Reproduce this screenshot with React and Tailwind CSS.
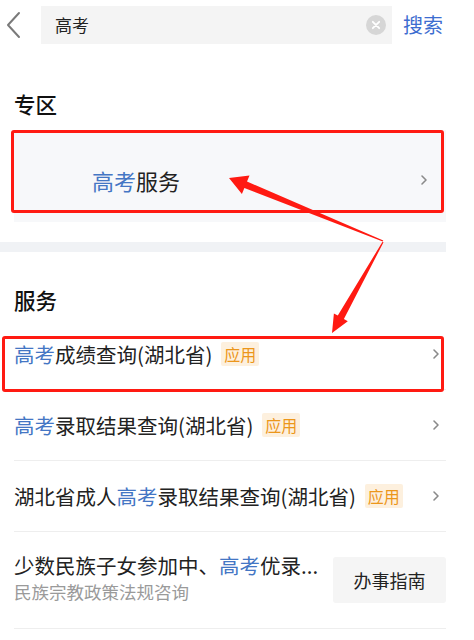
import React from "react";

const hl = "text-[#4476c4]";

function Chevron({ className = "" }) {
  return (
    <svg width="8" height="12" viewBox="0 0 8 12" className={className}>
      <polyline points="2,2 6,6 2,10" fill="none" stroke="#8a8a8a" strokeWidth="1.6" strokeLinecap="round" strokeLinejoin="round" />
    </svg>
  );
}

function Badge() {
  return (
    <span className="ml-[9px] inline-flex h-[24px] items-center rounded-[2px] bg-[#fdf0de] px-[3px] text-[16px] leading-none text-[#ec961a]">
      应用
    </span>
  );
}

function Row({ children, badge = true, last = false }) {
  return (
    <div className={`ml-[14px] flex h-[71px] items-center justify-between pr-[6px] ${last ? "" : "border-b border-[#eeeeee]"}`}>
      <div className="flex items-center text-[20.5px] leading-[26px] text-[#222]">
        <span>{children}</span>
        {badge && <Badge />}
      </div>
      <Chevron />
    </div>
  );
}

export default function App() {
  return (
    <div
      className="relative min-h-[640px] w-[474px] overflow-hidden bg-white"
      style={{ fontFamily: '"Noto Sans CJK SC", "Noto Sans", sans-serif' }}
    >
      <div className="w-[446px]">
        {/* header */}
        <div className="flex h-[50px] items-start pt-[6px]">
          <div className="flex h-[38px] w-[41px] items-center">
            <svg width="24" height="28" viewBox="0 0 24 28" className="ml-[4px]">
              <polyline points="15,2 4,14 15,26" fill="none" stroke="#7a7a7a" strokeWidth="2" strokeLinecap="round" strokeLinejoin="round" />
            </svg>
          </div>
          <div className="flex h-[38px] w-[351px] items-center justify-between bg-[#f4f4f4] pl-[14px] pr-[6px]">
            <span className="text-[17px] text-[#222]">高考</span>
            <svg width="20" height="20" viewBox="0 0 20 20">
              <circle cx="10" cy="10" r="10" fill="#d6d6d6" />
              <path d="M6.8 6.8 L13.2 13.2 M13.2 6.8 L6.8 13.2" stroke="#fff" strokeWidth="1.8" strokeLinecap="round" />
            </svg>
          </div>
          <div className="ml-[11px] flex h-[38px] items-center text-[20px] text-[#3d6dd0]">搜索</div>
        </div>

        {/* 专区 */}
        <div className="flex h-[80px] items-end pb-[13px] pl-[14px] text-[21.5px] font-medium leading-[26px] text-[#111]">
          专区
        </div>
        <div className="ml-[14px] flex h-[92px] items-center justify-between bg-[#f7f8fa] pl-[78px] pr-[18px] pt-[8px]">
          <span className="text-[22px] leading-[28px] text-[#222]">
            <span className={hl}>高考</span>服务
          </span>
          <Chevron />
        </div>
        <div className="h-[20px]" />
        <div className="h-[10px] bg-[#f0f2f5]" />

        {/* 服务 */}
        <div className="flex h-[67px] items-end pb-[6px] pl-[14px] text-[21.5px] font-medium leading-[26px] text-[#111]">
          服务
        </div>
        <Row>
          <span className={hl}>高考</span>成绩查询(湖北省)
        </Row>
        <Row>
          <span className={hl}>高考</span>录取结果查询(湖北省)
        </Row>
        <Row>
          湖北省成人<span className={hl}>高考</span>录取结果查询(湖北省)
        </Row>
        <div className="ml-[14px] flex h-[97px] items-center justify-between border-b border-[#eeeeee]">
          <div className="flex flex-col pb-[4px]">
            <span className="text-[20.5px] leading-[28px] text-[#222]">
              少数民族子女参加中、<span className={hl}>高考</span>优录...
            </span>
            <span className="text-[17.5px] leading-[26px] text-[#9a9a9a]">民族宗教政策法规咨询</span>
          </div>
          <div className="flex h-[46px] w-[113px] items-center justify-center rounded-[3px] bg-[#f5f5f5] text-[18px] text-[#222]">
            办事指南
          </div>
        </div>
      </div>

      {/* annotations */}
      <div className="pointer-events-none absolute left-[11px] top-[130px] h-[83px] w-[433px] rounded-[3px] border-[3px] border-[#ff1a12]" />
      <div className="pointer-events-none absolute left-[2px] top-[336px] h-[56px] w-[442px] rounded-[3px] border-[3px] border-[#ff1a12]" />
      <svg className="pointer-events-none absolute left-0 top-0" width="474" height="640" viewBox="0 0 474 640">
        <polygon
          fill="#ff1a12"
          points="229,178 249.5,175.5 247.0,181.5 383.3,240.4 382.7,241.6 244.4,188.1 241.9,194.1"
        />
        <polygon
          fill="#ff1a12"
          points="332,333 347.8,321.2 343.9,319.0 383.5,242.3 382.5,241.7 337.8,315.6 333.9,313.4"
        />
      </svg>
    </div>
  );
}
